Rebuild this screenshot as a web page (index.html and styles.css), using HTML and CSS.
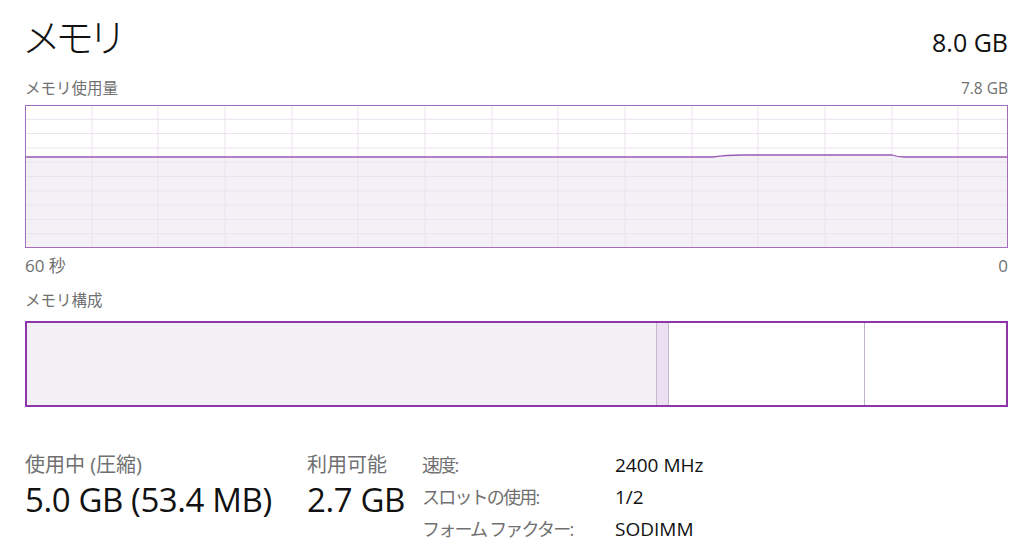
FILE: index.html
```html
<!DOCTYPE html>
<html lang="ja">
<head>
    <meta charset="utf-8">
    <meta name="viewport" content="width=device-width,initial-scale=1.0">
    <link rel="stylesheet" href="styles.css">
</head>
<body>
    <div class="page">
        <div class="head">
            <div class="title">メモリ</div>
            <div class="total">8.0 GB</div>
        </div>

        <div class="axis"><span>メモリ使用量</span><span>7.8 GB</span></div>
        <div class="chart">
            <svg viewBox="0 0 981 141" preserveAspectRatio="none" width="981" height="141">
                <path class="fill" d="M0 51 L687 51 Q700 49 716 49 L866 49 Q872 51 878 51 L981 51 L981 141 L0 141 Z"/>
                <g class="grid">
                    <path d="M0 13.3H981M0 27.6H981M0 41.9H981M0 56.2H981M0 70.5H981M0 84.8H981M0 99.1H981M0 113.4H981M0 127.7H981"/>
                    <path d="M66 0V141M132 0V141M199 0V141M266 0V141M332 0V141M399 0V141M466 0V141M532 0V141M599 0V141M666 0V141M732 0V141M799 0V141M866 0V141M932 0V141"/>
                </g>
                <path class="line" d="M0 51 L687 51 Q700 49 716 49 L866 49 Q872 51 878 51 L981 51"/>
            </svg>
        </div>
        <div class="axis axis-low"><span>60 秒</span><span>0</span></div>

        <div class="axis axis-comp"><span>メモリ構成</span></div>
        <div class="bar">
            <div class="seg seg-used"></div>
            <div class="seg seg-mod"></div>
            <div class="seg seg-standby"></div>
            <div class="seg seg-free"></div>
        </div>

        <div class="stats">
            <div class="stat stat-used">
                <div class="stat-label">使用中 (圧縮)</div>
                <div class="stat-value">5.0 GB (53.4 MB)</div>
            </div>
            <div class="stat stat-avail">
                <div class="stat-label">利用可能</div>
                <div class="stat-value">2.7 GB</div>
            </div>
            <div class="details">
                <span class="k">速度:</span><span class="v">2400 MHz</span>
                <span class="k">スロットの使用:</span><span class="v">1/2</span>
                <span class="k">フォーム ファクター:</span><span class="v">SODIMM</span>
            </div>
        </div>
    </div>
</body>
</html>
```

FILE: styles.css
```css
body {margin: 0; background: #fff; color: #111; font-family: "Open Sans", "Noto Sans CJK JP", sans-serif; overflow: hidden;}
.page {padding: 0 16px 0 25px;}

.head {display: flex; justify-content: space-between; align-items: baseline; height: 78px; box-sizing: border-box; padding-top: 12px;}
.title {font-size: 39px; font-weight: 300; line-height: 50px; letter-spacing: -6px; margin-left: -3px;}
.total {font-size: 25px; line-height: 50px;}

.axis {display: flex; justify-content: space-between; font-size: 15.5px; line-height: 20px; color: #707070;}
.axis-low {margin-top: 8px; font-size: 17px;}
.axis-comp {margin-top: 14px;}

.chart {margin-top: 7px; height: 141px; border: 1px solid #a46cbc; line-height: 0;}
.chart svg {display: block;}
.chart .fill {fill: #f4f1f6;}
.chart .grid path {stroke: #ebe2ef; stroke-width: 1; fill: none;}
.chart .line {stroke: #9a5ab4; stroke-width: 1.3; fill: none;}

.bar {display: flex; margin-top: 11px; height: 82px; border: 2px solid #8e35aa;}
.seg {height: 100%;}
.seg-used {width: 629px; background: #f3f0f5; border-right: 1px solid #c6b6cf;}
.seg-mod {width: 11px; background: #ecdff1; border-right: 1px solid #c6b6cf;}
.seg-standby {width: 195px; background: #fff; border-right: 1px solid #c0b2c8;}
.seg-free {flex: 1; background: #fff;}

.stats {display: flex; margin-top: 42px;}
.stat {padding-top: 6px;}
.stat-used {width: 282px;}
.stat-avail {width: 115px;}
.stat-label {font-size: 20px; line-height: 20px; color: #707070;}
.stat-value {font-size: 33px; line-height: 38px; margin-top: 6px; color: #111; letter-spacing: -0.4px;}

.details {display: grid; grid-template-columns: 193px auto; font-size: 19px; line-height: 32px;}
.details .k {color: #707070; font-size: 18px; letter-spacing: -1.8px;}
.details .v {color: #111;}
```
